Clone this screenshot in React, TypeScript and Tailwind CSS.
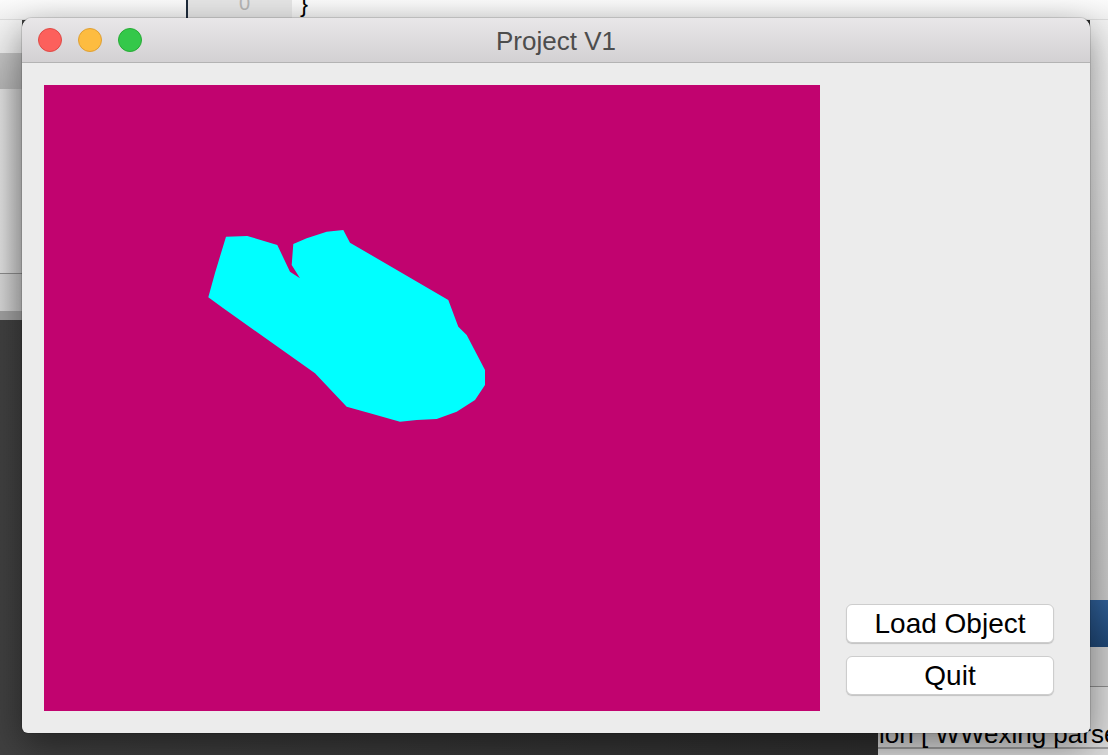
const shape =
  '182,151.7 203.3,151 233.3,160 246,186.7 256,193.3 247.7,180 249.3,159 262.7,153.3 282.7,146.7 299.3,145 306,157.7 404.3,215 414.3,241.7 422.7,250 441,285 441,300 431,315 412.7,326.7 392.7,334 372.7,335 356,336.7 326,328.3 302.7,321.7 271,288.3 179,223 164.3,212.3 171,188';

function TrafficLights() {
  return (
    <div className="flex items-center gap-[16px] pl-[16px]">
      <span className="block w-[24px] h-[24px] rounded-full bg-[#fc605c] border border-[#de4a46]" />
      <span className="block w-[24px] h-[24px] rounded-full bg-[#fdbc40] border border-[#de9f34]" />
      <span className="block w-[24px] h-[24px] rounded-full bg-[#34c84a] border border-[#27aa35]" />
    </div>
  );
}

function MacButton({ label }: { label: string }) {
  return (
    <button className="h-[39px] w-[208px] rounded-[6px] bg-white border border-[#cdcdcd] shadow-[0_1px_1px_rgba(0,0,0,0.18)] text-[28px] leading-none text-black">
      {label}
    </button>
  );
}

export default function App() {
  return (
    <div
      className="relative w-[1108px] h-[755px] overflow-hidden bg-gradient-to-r from-[#404040] to-[#2c2c2c]"
      style={{ fontFamily: '"Liberation Sans", Arial, sans-serif' }}
    >
      {/* desktop behind: editor window at the top */}
      <div className="absolute left-0 top-0 w-[1108px] h-[20px] bg-gradient-to-b from-[#fbfbfb] to-[#f1f1f1] border-b border-[#dcdcdc]">
        <div className="absolute left-[186px] top-0 h-[20px] w-[106px] bg-[#e6e6e6] border-l-2 border-[#1d2b3b]">
          <span className="absolute left-[51px] top-[-12px] text-[20px] text-[#b5b5b5]">0</span>
        </div>
        <span className="absolute left-[300px] top-[-14px] text-[24px] text-black">{'}'}</span>
      </div>

      {/* left strip: other window pieces */}
      <div className="absolute left-0 top-[20px] w-[22px] flex flex-col">
        <div className="h-[33px] bg-gradient-to-b from-[#f3f3f3] to-[#ebebeb]" />
        <div className="h-[36px] bg-gradient-to-b from-[#c2c2c2] to-[#b3b3b3]" />
        <div className="h-[185px] bg-gradient-to-r from-[#dedede] to-[#c6c6c6] border-b border-[#8a8a8a]" />
        <div className="h-[37px] bg-gradient-to-r from-[#d4d4d4] to-[#c2c2c2]" />
        <div className="h-[9px] bg-[#9f9f9f]" />
      </div>

      {/* right strip */}
      <div className="absolute left-[1090px] top-[20px] w-[18px] flex flex-col">
        <div className="h-[580px] bg-gradient-to-b from-[#f2f2f2] via-[#d9d9d9] to-[#c8c8c8]" />
        <div className="h-[47px] bg-gradient-to-b from-[#2f5f97] to-[#1f4674]" />
        <div className="h-[40px] bg-[#cdcdcd] border-b border-[#8c8c8c]" />
        <div className="h-[68px] bg-[#d9d9d9]" />
      </div>

      {/* bottom right: console text */}
      <div className="absolute left-[878px] top-[690px] w-[230px] h-[65px] overflow-hidden bg-[#dadada]">
        <div className="absolute left-0 top-[57px] w-full h-[2px] bg-[#9c9c9c]" />
        <span className="absolute left-[1px] top-[31px] whitespace-nowrap text-[26px] leading-none text-black">
          ion [ WWexing parser
        </span>
      </div>

      {/* main window */}
      <div className="absolute left-[22px] top-[18px] w-[1068px] h-[715px] flex flex-col rounded-t-[10px] rounded-b-[6px] overflow-hidden bg-[#ececec] shadow-[0_12px_36px_rgba(0,0,0,0.45),0_0_0_1px_rgba(0,0,0,0.12)]">
        <div className="grid grid-cols-[1fr_auto_1fr] items-center h-[45px] shrink-0 bg-gradient-to-b from-[#e9e7e9] to-[#d3d1d3] border-b border-[#b3b3b3]">
          <TrafficLights />
          <div className="pt-[2px] text-[26px] leading-none text-[#4d4d4d]">Project V1</div>
          <div />
        </div>

        <div className="flex flex-1 p-[22px]">
          <div className="w-[776px] h-[626px] shrink-0 bg-[#c1036f]">
            <svg width="776" height="626" viewBox="0 0 776 626" className="block">
              <polygon points={shape} fill="#00ffff" />
            </svg>
          </div>
          <div className="flex flex-col justify-end gap-[13px] pl-[26px] pb-[16px]">
            <MacButton label="Load Object" />
            <MacButton label="Quit" />
          </div>
        </div>
      </div>
    </div>
  );
}
